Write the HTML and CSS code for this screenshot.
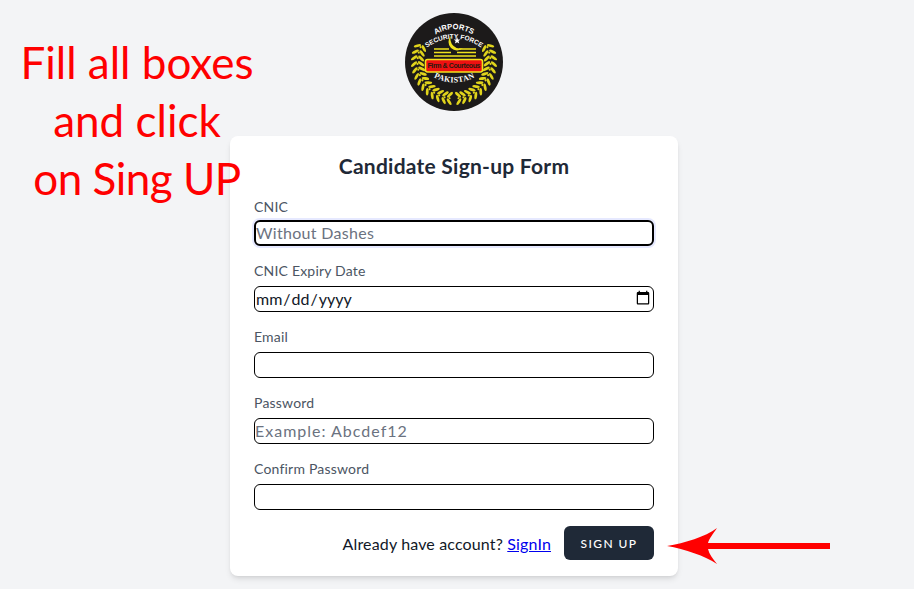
FILE: index.html
```html
<!DOCTYPE html>
<html lang="en">
<head>
  <meta charset="UTF-8" />
  <meta name="viewport" content="width=device-width, initial-scale=1.0"/>
  <title>Candidate Sign-up</title>
  <link rel="stylesheet" href="styles.css">
</head>
<body>
  <!-- Note painted over the page -->
  <div class="note">Fill all boxes<br>and click<br><span class="note-tight">on Sing UP</span></div>

  <svg class="note-arrow" width="170" height="40" viewBox="0 0 170 40">
    <path d="M0 18 C18 15 38 9 50 0 C46 6 42 11 41 15 L163 15 L163 21 L41 21 C42 26 46 31 50 36 C38 28 18 21 0 18 Z" fill="#ff0000"/>
  </svg>

  <main class="page">
    <svg class="logo" width="98" height="98" viewBox="0 0 98 98">
      <defs>
        <path id="arcTop" d="M24 26 Q49 6 74 26"/>
        <path id="arcMid" d="M17 38 Q49 13 81 38"/>
        <path id="arcBottom" d="M25 62 Q49 77 74 62"/>
        <g id="leaf">
          <ellipse cx="9" cy="49" rx="3.8" ry="1.4" transform="rotate(-40 9 49)"/>
          <ellipse cx="16" cy="49" rx="3.8" ry="1.4" transform="rotate(40 16 49)"/>
          <circle cx="12.5" cy="49" r="1.1"/>
        </g>
        <g id="branch">
          <use href="#leaf" transform="rotate(24 49 49)"/>
          <use href="#leaf" transform="rotate(15 49 49)"/>
          <use href="#leaf" transform="rotate(6 49 49)"/>
          <use href="#leaf" transform="rotate(-3 49 49)"/>
          <use href="#leaf" transform="rotate(-12 49 49)"/>
          <use href="#leaf" transform="rotate(-21 49 49)"/>
          <use href="#leaf" transform="rotate(-30 49 49)"/>
          <use href="#leaf" transform="rotate(-39 49 49)"/>
          <use href="#leaf" transform="rotate(-48 49 49)"/>
          <use href="#leaf" transform="rotate(-57 49 49)"/>
          <use href="#leaf" transform="rotate(-66 49 49)"/>
          <use href="#leaf" transform="rotate(-75 49 49)"/>
          <use href="#leaf" transform="rotate(-83 49 49)"/>
        </g>
      </defs>
      <circle cx="49" cy="49" r="49" fill="#1c1a1a"/>
      <g fill="#e0d41c">
        <use href="#branch"/>
        <use href="#branch" transform="translate(98 0) scale(-1 1)"/>
      </g>
      <text class="logo-arc"><textPath href="#arcTop" startOffset="50%" text-anchor="middle">AIRPORTS</textPath></text>
      <text class="logo-arc logo-arc-mid"><textPath href="#arcMid" startOffset="50%" text-anchor="middle">SECURITY FORCE</textPath></text>
      <path d="M46 23 A8 8 0 1 0 58 35 A9.5 9.5 0 0 1 46 23 Z" fill="#f0e31e"/>
      <path d="M52 24 l1 2.4 2.5 .1 -2 1.6 .8 2.5 -2.2 -1.4 -2.2 1.4 .8 -2.5 -2 -1.6 2.5 -.1 Z" fill="#fff"/>
      <path d="M29 36 H44 M54 36 H71 M29 39.5 H46 M52 39.5 H71 M29 43 H71" stroke="#f0e31e" stroke-width="1.7" fill="none"/>
      <rect x="20.5" y="46.5" width="57" height="12.5" rx="2" fill="#ee1111" stroke="#f2e21c" stroke-width="1.6"/>
      <text class="logo-motto" x="49" y="55.4" text-anchor="middle" textLength="53">Firm &amp; Courteous</text>
      <text class="logo-country"><textPath href="#arcBottom" startOffset="50%" text-anchor="middle">PAKISTAN</textPath></text>
    </svg>

    <form class="card">
      <h2 class="card-title">Candidate Sign-up Form</h2>

      <div class="field">
        <label for="cnic">CNIC</label>
        <input type="text" id="cnic" class="is-focused" placeholder="Without Dashes" />
      </div>
      <div class="field">
        <label for="expiry">CNIC Expiry Date</label>
        <input type="date" id="expiry" />
      </div>
      <div class="field">
        <label for="email">Email</label>
        <input type="email" id="email" />
      </div>
      <div class="field">
        <label for="password">Password</label>
        <input type="password" id="password" class="wide-hint" placeholder="Example: Abcdef12" />
      </div>
      <div class="field">
        <label for="confirm">Confirm Password</label>
        <input type="password" id="confirm" />
      </div>

      <div class="actions">
        <span>Already have account? <a href="#">SignIn</a></span>
        <button type="button">Sign up</button>
      </div>
    </form>
  </main>
</body>
</html>
```

FILE: styles.css
```css
body {
  margin: 0;
  height: 589px;
  overflow: hidden;
  background: #f3f4f6;
  color: #111827;
  font-family: 'Lato', 'Open Sans', sans-serif;
}

.page {
  display: flex;
  flex-direction: column;
  align-items: center;
  padding: 13px 6px 0 0;
}

.logo {
  display: block;
  margin-bottom: 25px;
}

.logo-arc {
  font: bold 7.6px 'Liberation Sans', sans-serif;
  fill: #fff;
}

.logo-arc-mid {
  font-size: 6.6px;
}

.logo-motto {
  font: bold 7px 'Liberation Sans', sans-serif;
  fill: #2a1a10;
}

.logo-country {
  font: bold 8px 'Liberation Serif', serif;
  fill: #fff;
  letter-spacing: 0.4px;
}

/* Карточка формы */
.card {
  width: 400px;
  padding: 16px 24px;
  background: #fff;
  border-radius: 8px;
  box-shadow: 0 4px 6px -1px rgba(0, 0, 0, 0.1), 0 2px 4px -2px rgba(0, 0, 0, 0.1);
}

.card-title {
  margin: 0 0 16px;
  font-size: 21px;
  line-height: 28px;
  font-weight: 700;
  letter-spacing: 0.25px;
  text-align: center;
  color: #1f2937;
}

.field {
  margin-bottom: 16px;
}

.field label {
  display: block;
  margin-bottom: 6px;
  font-size: 14px;
  line-height: 18px;
  letter-spacing: 0.2px;
  color: #4b5563;
}

.field:first-of-type label {
  margin-bottom: 2px;
  line-height: 22px;
}

.field input {
  display: block;
  box-sizing: border-box;
  width: 100%;
  height: 26px;
  padding: 0 0 2px;
  background: #fff;
  border: 1px solid #000;
  border-radius: 6px;
  font-family: inherit;
  font-size: 16px;
  color: #111827;
  outline: none;
}

.field input::placeholder {
  letter-spacing: 0.3px;
  color: #6b7280;
}

.field input.wide-hint::placeholder {
  letter-spacing: 1px;
}

.field input.is-focused {
  padding-left: 0;
  border: 2px solid #000;
  box-shadow: 0 0 0 2px #e6e9ff;
}

.actions {
  display: flex;
  justify-content: flex-end;
  align-items: center;
  gap: 13px;
  font-size: 16px;
  letter-spacing: 0.15px;
}

.actions a {
  color: #0000ee;
}

.actions button {
  width: 90px;
  height: 34px;
  padding: 0;
  background: #1f2937;
  color: #fff;
  border: none;
  border-radius: 6px;
  font-family: inherit;
  font-size: 12px;
  font-weight: 500;
  letter-spacing: 0.12em;
  text-transform: uppercase;
}

/* Пометки поверх страницы */
.note {
  position: absolute;
  z-index: 2;
  left: 0;
  top: 33px;
  width: 274px;
  font-size: 44px;
  line-height: 58px;
  text-align: center;
  color: #ff0000;
}

.note-tight {
  letter-spacing: -0.5px;
}

.note-arrow {
  position: absolute;
  z-index: 2;
  left: 667px;
  top: 528px;
}
```
